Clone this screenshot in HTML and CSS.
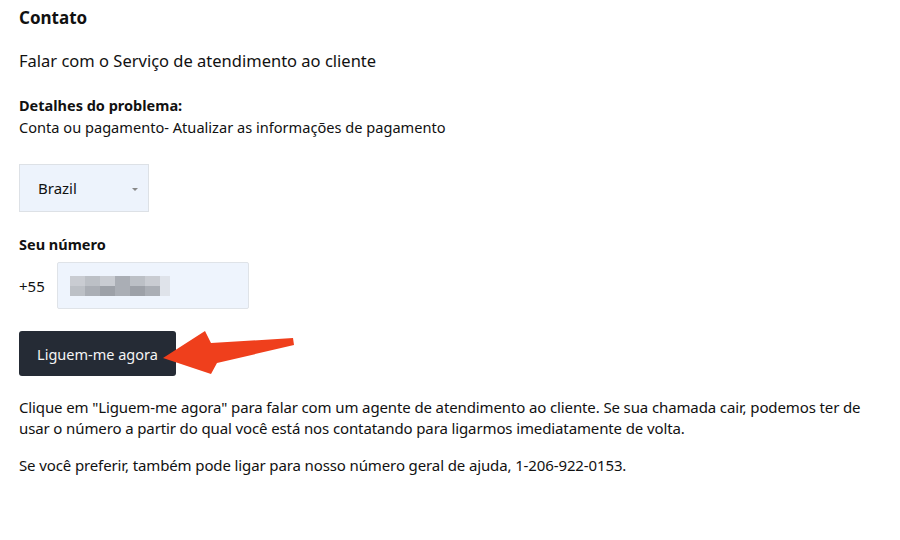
FILE: index.html
```html
<!DOCTYPE html>
<html lang="pt">
<head>
<meta charset="utf-8">
<link rel="stylesheet" href="styles.css">
</head>
<body>
<main class="page">
  <h1 class="title">Contato</h1>
  <p class="subtitle">Falar com o Serviço de atendimento ao cliente</p>
  <div class="details">
    <div class="label">Detalhes do problema:</div>
    <div class="detail-text">Conta ou pagamento- Atualizar as informações de pagamento</div>
  </div>
  <div class="select">
    <span>Brazil</span>
    <span class="caret"></span>
  </div>
  <div class="label number-label">Seu número</div>
  <div class="phone-row">
    <span class="prefix">+55</span>
    <div class="input">
      <div class="blur">
        <div class="blur-row">
          <i class="b1"></i><i class="b2"></i><i class="b1"></i><i class="b3"></i><i class="b2"></i><i class="b1"></i><i class="b4"></i>
        </div>
        <div class="blur-row">
          <i class="b2"></i><i class="b3"></i><i class="b5"></i><i class="b3"></i><i class="b5"></i><i class="b3"></i><i class="b4"></i>
        </div>
      </div>
    </div>
  </div>
  <div class="button-wrap">
    <button class="call-btn">Liguem-me agora</button>
    <svg class="arrow" width="140" height="50" viewBox="0 0 140 50">
      <polygon points="2,32 44,5 50,17 132,12 133,19 56,37 50,48" fill="#ef3f1c"/>
    </svg>
  </div>
  <p class="info">Clique em "Liguem-me agora" para falar com um agente de atendimento ao cliente. Se sua chamada cair, podemos ter de usar o número a partir do qual você está nos contatando para ligarmos imediatamente de volta.</p>
  <p class="info">Se você preferir, também pode ligar para nosso número geral de ajuda, 1-206-922-0153.</p>
</main>
</body>
</html>
```
FILE: styles.css
```css
* { box-sizing: border-box; }
html, body { margin: 0; background: #fff; }
body {
  font-family: "Noto Sans", "Open Sans", sans-serif;
  color: #111;
}
.page {
  padding: 6px 19px 0 19px;
  width: 900px;
  height: 540px;
}
.title {
  font-size: 17px;
  font-weight: 700;
  margin: 0;
  line-height: 24px;
}
.subtitle {
  font-size: 16.5px;
  margin: 20px 0 0 0;
  line-height: 22px;
}
.details { margin-top: 23px; }
.label {
  font-size: 14.5px;
  font-weight: 700;
  line-height: 20px;
}
.detail-text {
  font-size: 14.6px;
  line-height: 20px;
  margin-top: 2px;
}
.select {
  margin-top: 27px;
  width: 130px;
  height: 48px;
  background: #edf3fc;
  border: 1px solid #dde1e6;
  display: flex;
  align-items: center;
  justify-content: space-between;
  padding: 0 10px 0 18px;
  font-size: 15px;
}
.caret {
  width: 0;
  height: 0;
  border-left: 3px solid transparent;
  border-right: 3px solid transparent;
  border-top: 3px solid #888;
  margin-top: 2px;
}
.number-label { margin-top: 22px; }
.phone-row {
  display: flex;
  align-items: center;
  margin-top: 8px;
  gap: 12px;
}
.prefix { font-size: 15px; width: 26px; }
.input {
  width: 192px;
  height: 47px;
  background: #eef4fd;
  border: 1px solid #dfe3e8;
  border-radius: 2px;
  display: flex;
  align-items: center;
  padding-left: 12px;
}
.blur { display: flex; flex-direction: column; }
.blur-row { display: flex; }
.blur-row i { display: block; width: 15px; height: 10px; }
.blur-row i:last-child { width: 10px; }
.b1 { background: #c9ccd2; }
.b2 { background: #bcc0c6; }
.b3 { background: #aaaeb5; }
.b4 { background: #dfe3ea; }
.b5 { background: #9da1a8; }
.button-wrap {
  position: relative;
  margin-top: 22px;
  height: 45px;
}
.call-btn {
  width: 157px;
  height: 45px;
  background: #252b35;
  color: #f4f4f4;
  border: none;
  border-radius: 3px;
  font-family: inherit;
  font-size: 14.5px;
  padding: 0;
}
.arrow {
  position: absolute;
  left: 142px;
  top: -5px;
}
.info {
  font-size: 15px;
  line-height: 21px;
  margin: 21px 0 0 0;
  max-width: 850px;
  letter-spacing: -0.12px;
}
.info + .info { margin-top: 16px; }
```
